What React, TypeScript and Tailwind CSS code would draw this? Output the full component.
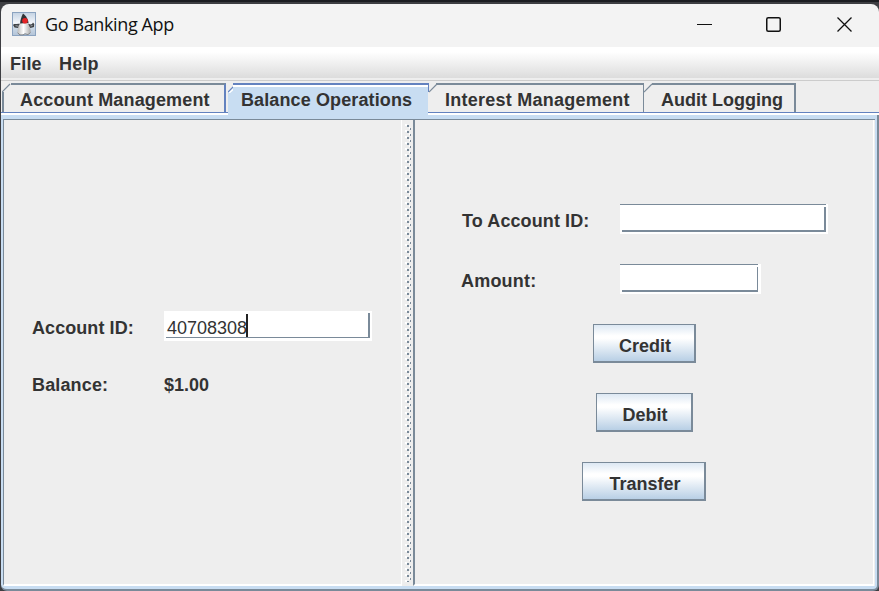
import React from "react";

function DukeIcon() {
  return (
    <svg width="24" height="24" viewBox="0 0 24 24" className="shrink-0">
      <defs>
        <linearGradient id="sky" x1="0" y1="0" x2="0" y2="1">
          <stop offset="0" stopColor="#c3d2e3" />
          <stop offset="0.45" stopColor="#f3f6fa" />
          <stop offset="0.65" stopColor="#ccd9e6" />
          <stop offset="1" stopColor="#b3c4d8" />
        </linearGradient>
        <linearGradient id="belly" x1="0" y1="0" x2="1" y2="0">
          <stop offset="0" stopColor="#bcbcbc" />
          <stop offset="0.45" stopColor="#ffffff" />
          <stop offset="1" stopColor="#a8a8a8" />
        </linearGradient>
      </defs>
      <rect x="0.5" y="0.5" width="23" height="23" fill="url(#sky)" stroke="#8ba3c0" />
      <path d="M8.5 12C6 11 4 12.5 2 12L1 13L2.5 15.5L6 16L8.5 14.5Z" fill="#404347" />
      <path d="M15.5 11.5C17 12 18.5 13 20 12L21 10.5L22.3 12L22 15L18.5 16L16 14Z" fill="#404347" />
      <path d="M3.5 13.7L6.5 14.2L8 13M18.5 14L20.5 13.5" stroke="#a1a7ad" fill="none" />
      <path d="M11 1.5C9.5 4.5 8.2 8 8 12L12 13L16.5 11C16.3 7 13.6 3.5 11 1.5Z" fill="#303336" />
      <path d="M8 11.5C6.6 14 5.2 18 5.6 21L9 23L13 21.5L17 22.3L18.8 19.5C18.4 16 17.2 13.5 15.8 11Z" fill="url(#belly)" />
      <path d="M5.6 20.8L8 22.9H11L13 21.8L16 22.6L18.6 20.5" fill="none" stroke="#85878a" />
      <circle cx="13" cy="8.8" r="2.8" fill="#e52325" />
    </svg>
  );
}

function TitleBar() {
  return (
    <header className="flex h-[43px] shrink-0 items-center rounded-t-[8px] bg-[#f3f3f3] pl-[11px] pb-[3px]">
      <DukeIcon />
      <h1 className="ml-[9px] flex-1 whitespace-nowrap font-['Open_Sans','Noto_Sans',sans-serif] text-[18px] leading-6 tracking-[-0.38px] text-[#111]">
        Go Banking App
      </h1>
      <svg width="160" height="20" viewBox="0 0 160 20" fill="none" stroke="#111" className="mr-[23px] shrink-0">
        <path d="M1 10.5H16" />
        <rect x="70.75" y="3.75" width="13.5" height="13.5" rx="1.5" strokeWidth="1.5" />
        <path d="M141.5 3.5L155.5 17.5M155.5 3.5L141.5 17.5" strokeWidth="1.3" />
      </svg>
    </header>
  );
}

function MenuBar() {
  return (
    <nav className="flex h-[34px] shrink-0 border-b border-[#ccc] bg-[linear-gradient(#fff_0px,#fff_5px,#dcdcdc_31px,#eee_31px)] pl-[9px] text-[18px] font-bold leading-[35px] tracking-[0.2px]">
      <span className="w-[49px]">File</span>
      <span>Help</span>
    </nav>
  );
}

function Notch({ selected = false }: { selected?: boolean }) {
  return (
    <svg width="9" height="10" viewBox="0 0 9 10" className="shrink-0">
      {selected && <path d="M1 10V9L9 2V10Z" fill="#c8ddf2" />}
      {selected && <path d="M1 10L9 3" stroke="#fff" strokeWidth="1.5" />}
      <path d="M0 9L8 1" strokeWidth="1.1" stroke={selected ? "#6382bf" : "#7a8a99"} />
    </svg>
  );
}

function TabStrip() {
  return (
    <div className="flex h-[34px] shrink-0 bg-[#eee] pt-[2px] text-[18px] font-bold leading-[31px]">
      <div className="flex h-[32px] w-[227px] border-b-2 border-white shadow-[inset_0_-1px_#6382bf]">
        <div className="mt-[9px] h-[20px] w-[3px] border-r-2 border-[#7a8a99]" />
        <div className="-ml-[2px] w-[9px]"><Notch /></div>
        <div className="mb-px w-[215px] border-r-2 border-t-2 border-r-[#6382bf] border-t-[#7a8a99] pl-[9px]">
          <span className="tracking-[0.15px]">Account Management</span>
        </div>
      </div>
      <div className="flex h-[32px] w-[200px]">
        <div className="w-[5px] bg-[linear-gradient(#eee_8px,#c8ddf2_8px)]"><Notch selected /></div>
        <div className="w-[195px] border-t-2 border-[#6382bf] bg-[linear-gradient(#fff_2px,#c8ddf2_2px)] pl-[8px] tracking-[0.12px]">
          <span className="whitespace-nowrap">Balance Operations</span>
        </div>
      </div>
      <div className="flex h-[32px] w-[216px] border-b-2 border-white shadow-[inset_0_-1px_#6382bf]">
        <div className="h-[9px] w-px bg-[#6382bf]" />
        <div className="w-[7px]"><Notch /></div>
        <div className="mb-px w-[208px] border-r border-t-2 border-[#7a8a99] pl-[9px] tracking-[0.25px]">Interest Management</div>
      </div>
      <div className="flex h-[32px] flex-1 border-b-2 border-white shadow-[inset_0_-1px_#6382bf]">
        <div className="w-[8px]"><Notch /></div>
        <div className="mb-px w-[144px] border-r-2 border-t-2 border-[#7a8a99] pl-[9px]">Audit Logging</div>
      </div>
    </div>
  );
}

function FieldPair({ width, thin }: { width: string; thin?: boolean }) {
  return (
    <div className={`${width} h-[30px] bg-white`}>
      <div className={thin ? "h-[28px] w-[138px] border-t border-[#7a8a99]" : "h-[28px] w-[206px] border-t border-[#7a8a99]"}>
        <div className={thin ? "ml-[2px] mt-[2px] h-[25px] border-b-2 border-r border-[#7a8a99]" : "ml-[2px] mt-[2px] h-[25px] border-b-2 border-r-2 border-[#7a8a99]"} />
      </div>
    </div>
  );
}

function MetalButton({ label, size }: { label: string; size: string }) {
  return (
    <button className={`${size} h-[39px] border-b-2 border-l border-r-2 border-t border-[#7a8a99] bg-[linear-gradient(#dde8f3_0%,#fff_30%,#fff_37%,#b8cfe5_100%)] pl-[3px] pt-[5px] text-center text-[18px] font-bold leading-[32px]`}>
      {label}
    </button>
  );
}

function LeftPane() {
  return (
    <section className="w-[399px] border-b-2 border-l border-r border-b-white border-l-[#7a8a99] border-r-white pl-[28px] pt-[191px] text-[18px] font-bold">
      <div className="flex h-[30px]">
        <span className="w-[132px] leading-[35px] tracking-[0.07px]">Account ID:</span>
        <div className="h-[30px] w-[208px] bg-white">
          <div className="ml-[2px] h-[27px] w-[204px] border-b border-[#7a8a99] pt-[2px]">
            <div className="flex h-[24px] border-r-2 border-[#7a8a99] pl-px pt-px font-normal text-[#333]">
              <span className="inline-block w-[79px] leading-[29px]">40708308</span>
              <span className="h-[23px] w-[2px] bg-[#222]" />
            </div>
          </div>
        </div>
      </div>
      <div className="mt-[27px] flex leading-[35px]">
        <span className="w-[132px] tracking-[0.15px]">Balance:</span>
        <span>$1.00</span>
      </div>
    </section>
  );
}

function Divider() {
  return (
    <svg width="11" height="466" className="shrink-0">
      <defs>
        <pattern id="bumps" x="3" y="4" width="7" height="6" patternUnits="userSpaceOnUse">
          <rect x="0" y="0" width="2" height="2" fill="#fff" />
          <rect x="2" y="1" width="2" height="2" fill="#7a8a99" />
          <rect x="4" y="3" width="1" height="2" fill="#fff" />
          <rect x="5" y="4" width="1" height="2" fill="#7a8a99" />
        </pattern>
      </defs>
      <rect x="3" y="4" width="7" height="458" fill="url(#bumps)" />
    </svg>
  );
}

function RightPane() {
  return (
    <section className="flex flex-1 flex-col border-b-2 border-l-2 border-r border-b-white border-l-[#7a8a99] border-r-white pt-[84px] text-[18px] font-bold">
      <div className="flex h-[33px] pl-[47px]">
        <span className="w-[158px] leading-[35px] tracking-[0.1px]">To Account ID:</span>
        <FieldPair width="w-[208px]" />
      </div>
      <div className="mt-[27px] flex h-[33px] pl-[46px]">
        <span className="w-[159px] leading-[35px] tracking-[0.2px]">Amount:</span>
        <FieldPair width="w-[141px]" thin />
      </div>
      <div className="flex w-[458px] flex-col items-center gap-[30px] pt-[27px]">
        <MetalButton label="Credit" size="w-[103px]" />
        <MetalButton label="Debit" size="w-[97px]" />
        <MetalButton label="Transfer" size="w-[124px]" />
      </div>
    </section>
  );
}

export default function App() {
  return (
    <div className="flex h-[591px] w-[879px] flex-col overflow-hidden border-t-2 border-[#1c1d21] bg-[#3d3e42] pl-px pt-[2px] font-['Liberation_Sans',Arial,sans-serif] text-[#333]">
      <TitleBar />
      <MenuBar />
      <TabStrip />
      <main className="flex h-[476px] shrink-0 flex-col rounded-b-[6px] border-b-2 border-r-2 border-[#7a8a99] bg-[#c8ddf2] pb-[3px] pl-[2px] pr-[2px] pt-[4px]">
        <div className="flex flex-1 border-t border-[#7a8a99] bg-[#eee] pr-px">
          <LeftPane />
          <Divider />
          <RightPane />
        </div>
      </main>
    </div>
  );
}
